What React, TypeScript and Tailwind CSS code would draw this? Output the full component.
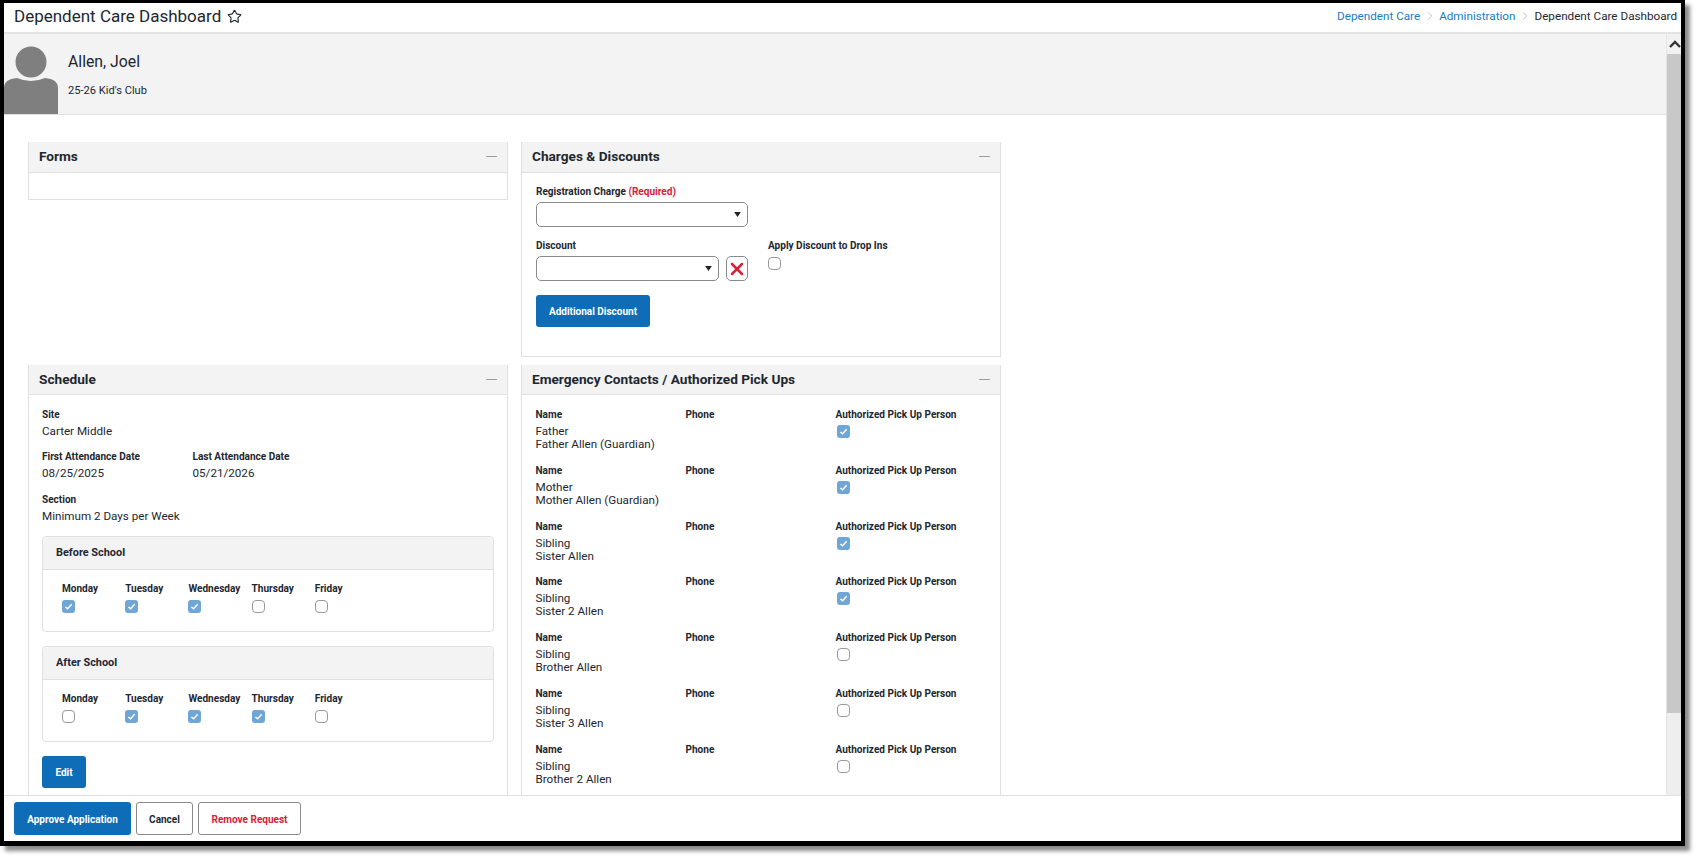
import React from "react";
import { Star, ChevronRight, X, Minus } from "lucide-react";

const Check = ({ on }: { on?: boolean }) =>
  on ? (
    <div className="w-[13px] h-[13px] rounded-[3px] bg-[#6fa6d6] flex items-center justify-center">
      <svg width="9" height="9" viewBox="0 0 10 10"><path d="M1.5 5.5 L4 7.5 L8.5 2.5" fill="none" stroke="#fff" strokeWidth="1.6" /></svg>
    </div>
  ) : (
    <div className="w-[13px] h-[13px] rounded-[4px] border border-[#999999] bg-white" />
  );

const Label = ({ children }: { children: React.ReactNode }) => (
  <div className="text-[10.05px] leading-[14px] font-bold text-[#1e2730]">{children}</div>
);
const Value = ({ children }: { children: React.ReactNode }) => (
  <div className="text-[11.65px] leading-[13px] text-[#1e2730]">{children}</div>
);

const PanelHead = ({ title, tall }: { title: string; tall?: boolean }) => (
  <div className={`${tall ? "h-[31px] pb-[2px]" : "h-[30px]"} bg-[#f3f3f3] border-b border-[#e0e0e0] flex items-center justify-between pl-[10px] pr-[7px] shrink-0`}>
    <span className="text-[13.65px] font-bold text-[#1e2730]">{title}</span>
    <Minus size={17} strokeWidth={0.9} className="text-[#666]" />
  </div>
);

const Select = ({ w }: { w: string }) => (
  <div className={`${w} h-[25px] border border-[#8a8a8a] rounded-[5px] bg-white flex items-center justify-end pr-[6px]`}>
    <svg width="7" height="5" viewBox="0 0 8 6"><path d="M0 0 H8 L4 6 Z" fill="#222" /></svg>
  </div>
);

const Days = ({ title, vals }: { title: string; vals: boolean[] }) => (
  <div className="border border-[#e0e0e0] rounded-[4px] h-[96px]">
    <div className="h-[33px] bg-[#f3f3f3] border-b border-[#e0e0e0] rounded-t-[4px] flex items-center pl-[13px] text-[10.9px] font-bold text-[#1e2730]">{title}</div>
    <div className="flex pl-[19px] pt-[12px]">
      {["Monday", "Tuesday", "Wednesday", "Thursday", "Friday"].map((d, i) => (
        <div key={d} className="w-[63.2px]">
          <Label>{d}</Label>
          <div className="mt-[4px]"><Check on={vals[i]} /></div>
        </div>
      ))}
    </div>
  </div>
);

const contacts: [string, string, boolean][] = [
  ["Father", "Father Allen (Guardian)", true],
  ["Mother", "Mother Allen (Guardian)", true],
  ["Sibling", "Sister Allen", true],
  ["Sibling", "Sister 2 Allen", true],
  ["Sibling", "Brother Allen", false],
  ["Sibling", "Sister 3 Allen", false],
  ["Sibling", "Brother 2 Allen", false],
];

export default function App() {
  return (
    <div className="w-[1700px] h-[861px] bg-white overflow-hidden" style={{ fontFamily: "Roboto, sans-serif" }}>
      <div className="w-[1685px] h-[846px] border-t-[3px] border-l-[4px] border-r-[4px] border-b-[5px] border-black shadow-[5px_5px_4px_rgba(0,0,0,0.45)] flex flex-col bg-white">
        <header className="h-[31px] border-b-2 border-[#e3e3e3] flex items-center justify-between pl-[10px] pr-[4px] pb-[2px] shrink-0">
          <div className="flex items-center gap-[6px]">
            <span className="text-[17px] text-[#1e2730]">Dependent Care Dashboard</span>
            <Star size={15} strokeWidth={1.8} className="text-[#1e2730]" />
          </div>
          <div className="flex items-center text-[11.7px]">
            <span className="text-[#1a7cc4]">Dependent Care</span>
            <ChevronRight size={14} strokeWidth={1.2} className="text-[#aaa] mx-[2.5px]" />
            <span className="text-[#1a7cc4]">Administration</span>
            <ChevronRight size={14} strokeWidth={1.2} className="text-[#aaa] mx-[2.5px]" />
            <span className="text-[#1e2730]">Dependent Care Dashboard</span>
          </div>
        </header>

        <div className="flex flex-1 min-h-0">
          <main className="flex-1 min-w-0 overflow-hidden">
            <div className="h-[81px] bg-[#f3f3f3] border-b border-[#e0e0e0] flex">
              <svg width="54" height="80" viewBox="0 0 54 80" className="shrink-0">
                <circle cx="27" cy="28" r="15.5" fill="#7f7f7f" />
                <path d="M0 80 V54 Q0 45 13 44 Q27 50 41 44 Q54 45 54 54 V80 Z" fill="#7f7f7f" />
              </svg>
              <div className="pl-[10px] pt-[18px]">
                <div className="text-[15.8px] leading-[20px] text-[#1e2730]">Allen, Joel</div>
                <div className="text-[11.1px] leading-[14px] mt-[12px] text-[#1e2730]">25-26 Kid's Club</div>
              </div>
            </div>

            <div className="grid grid-cols-[480px_480px] gap-x-[13px] gap-y-[8px] pl-[24px] pt-[27px]">
              <section className="self-start h-[58px] border border-t-0 border-[#e0e0e0] flex flex-col">
                <PanelHead title="Forms" tall />
              </section>
              <section className="h-[215px] border border-t-0 border-[#e0e0e0] flex flex-col">
                <PanelHead title="Charges & Discounts" tall />
                <div className="pl-[14px] pt-[12px]">
                  <Label>Registration Charge <span className="text-[#d8203a]">(Required)</span></Label>
                  <div className="mt-[3px]"><Select w="w-[212px]" /></div>
                  <div className="flex mt-[12px]">
                    <div className="w-[232px]">
                      <Label>Discount</Label>
                      <div className="flex gap-[7px] mt-[3px]">
                        <Select w="w-[183px]" />
                        <div className="w-[22px] h-[25px] border border-[#8a8a8a] rounded-[5px] flex items-center justify-center shrink-0">
                          <X size={20} strokeWidth={3} className="text-[#d8203a] shrink-0" />
                        </div>
                      </div>
                    </div>
                    <div>
                      <Label>Apply Discount to Drop Ins</Label>
                      <div className="mt-[4px]"><Check /></div>
                    </div>
                  </div>
                  <button className="mt-[14px] pt-[1px] w-[114px] h-[32px] bg-[#0f6db7] rounded-[3px] text-white text-[10px] font-bold">Additional Discount</button>
                </div>
              </section>

              <section className="h-[600px] border border-t-0 border-[#e0e0e0] flex flex-col">
                <PanelHead title="Schedule" />
                <div className="px-[13px] pt-[13px]">
                  <Label>Site</Label>
                  <div className="mt-[3px]"><Value>Carter Middle</Value></div>
                  <div className="flex mt-[12px]">
                    <div className="w-[150.5px]">
                      <Label>First Attendance Date</Label>
                      <div className="mt-[3px]"><Value>08/25/2025</Value></div>
                    </div>
                    <div>
                      <Label>Last Attendance Date</Label>
                      <div className="mt-[3px]"><Value>05/21/2026</Value></div>
                    </div>
                  </div>
                  <div className="mt-[13px]">
                    <Label>Section</Label>
                    <div className="mt-[3px]"><Value>Minimum 2 Days per Week</Value></div>
                  </div>
                  <div className="mt-[13px]">
                    <Days title="Before School" vals={[true, true, true, false, false]} />
                  </div>
                  <div className="mt-[14px]">
                    <Days title="After School" vals={[false, true, true, true, false]} />
                  </div>
                  <button className="mt-[14px] pt-[1px] w-[44px] h-[32px] bg-[#0f6db7] rounded-[3px] text-white text-[10px] font-bold">Edit</button>
                </div>
              </section>

              <section className="h-[600px] border border-t-0 border-[#e0e0e0] flex flex-col">
                <PanelHead title="Emergency Contacts / Authorized Pick Ups" />
                <div className="pl-[13.5px] pt-[13px]">
                  {contacts.map(([a, b, on], i) => (
                    <div key={i} className="flex h-[55.75px]">
                      <div className="w-[150px]">
                        <Label>Name</Label>
                        <div className="mt-[3px]"><Value>{a}</Value></div>
                        <Value>{b}</Value>
                      </div>
                      <div className="w-[150px]"><Label>Phone</Label></div>
                      <div>
                        <Label>Authorized Pick Up Person</Label>
                        <div className="mt-[3px] ml-[1px]"><Check on={on} /></div>
                      </div>
                    </div>
                  ))}
                </div>
              </section>
            </div>
          </main>

          <div className="w-[15px] shrink-0 bg-[#eeeeee] border-l border-[#e4e4e4] flex flex-col overflow-hidden">
            <div className="h-[20px] bg-[#f1f1f1] flex items-center justify-end shrink-0">
              <svg width="12" height="8" viewBox="0 0 12 8"><path d="M1 7 L6 2 L11 7" fill="none" stroke="#333" strokeWidth="2.4" /></svg>
            </div>
            <div className="h-[659px] bg-[#c8c8c8] shrink-0" />
          </div>
        </div>

        <footer className="h-[46px] border-t border-[#e0e0e0] bg-white flex items-center gap-[5px] pl-[10px] shrink-0">
          <button className="w-[117px] h-[33px] pt-[1px] bg-[#0f6db7] rounded-[3px] text-white text-[10px] font-bold">Approve Application</button>
          <button className="w-[57px] h-[33px] pt-[1px] border border-[#8a8a8a] rounded-[3px] text-[#1e2730] text-[10px] font-bold">Cancel</button>
          <button className="w-[103px] h-[33px] pt-[1px] border border-[#8a8a8a] rounded-[3px] text-[#d8203a] text-[10px] font-bold">Remove Request</button>
        </footer>
      </div>
    </div>
  );
}
